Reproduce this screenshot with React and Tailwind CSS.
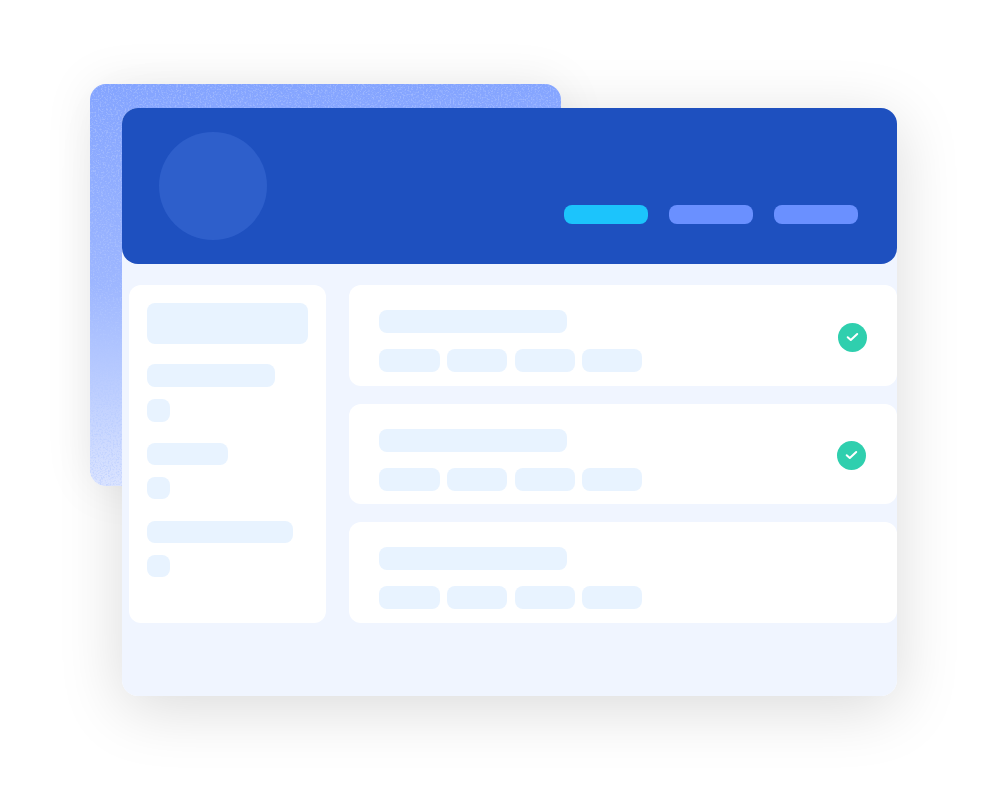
function Check({ className }) {
  return (
    <div className={`flex h-[29px] w-[29px] shrink-0 items-center justify-center rounded-full bg-[#2fcfae] ${className}`}>
      <svg width="13" height="10" viewBox="0 0 13 10" fill="none">
        <path d="M1.7 5.2 L4.8 8 L11.2 2" stroke="white" strokeWidth="2" strokeLinecap="round" strokeLinejoin="round" />
      </svg>
    </div>
  );
}

function Row({ check, className, checkClass }) {
  return (
    <div className={`flex items-start justify-between rounded-[12px] bg-white pl-[30px] pt-[25px] ${className}`}>
      <div className="flex flex-col gap-4">
        <div className="h-[23px] w-[188px] rounded-lg bg-[#e8f3ff]" />
        <div className="flex gap-[7.5px]">
          <div className="h-[23px] w-[60.5px] rounded-lg bg-[#e8f3ff]" />
          <div className="h-[23px] w-[60px] rounded-lg bg-[#e8f3ff]" />
          <div className="h-[23px] w-[60px] rounded-lg bg-[#e8f3ff]" />
          <div className="h-[23px] w-[60px] rounded-lg bg-[#e8f3ff]" />
        </div>
      </div>
      {check && <Check className={checkClass} />}
    </div>
  );
}

export default function App() {
  return (
    <div className="grid h-[792px] w-[987px] overflow-hidden bg-white">
      <div className="col-start-1 row-start-1 ml-[122px] mt-[108px] h-[588px] w-[775px] rounded-[16px] shadow-[0_12px_64px_rgba(0,0,0,0.15)]" />
      <div className="relative z-10 col-start-1 row-start-1 ml-[90px] mt-[84px] h-[402px] w-[471px] overflow-hidden rounded-[16px] bg-gradient-to-b from-[#84a4ff] via-[#9db6ff] via-50% to-[#dbe4ff] shadow-[0_0_50px_rgba(0,0,0,0.08)]">
        <svg className="h-full w-full opacity-50" aria-hidden="true">
          <filter id="grain">
            <feTurbulence type="fractalNoise" baseFrequency="0.6" numOctaves="2" seed="4" />
            <feColorMatrix values="0 0 0 0 0.45  0 0 0 0 0.58  0 0 0 0 1  0 0 0 4 -1.9" />
          </filter>
          <rect width="100%" height="100%" filter="url(#grain)" />
        </svg>
      </div>
      <div className="relative z-20 col-start-1 row-start-1 ml-[122px] mt-[108px] h-[588px] w-[775px] rounded-[16px] bg-[#f0f5ff]">
        <div className="flex h-[156px] items-end justify-between rounded-[16px] bg-[#1e50bf] pb-10 pl-[37px] pr-[39px] pt-6">
          <div className="h-[108px] w-[108px] self-start rounded-full bg-[#2e5fcb]" />
          <div className="flex gap-[21px]">
            <div className="h-[19px] w-[84px] rounded-lg bg-[#1cc4fc]" />
            <div className="h-[19px] w-[84px] rounded-lg bg-[#6a90ff]" />
            <div className="h-[19px] w-[84px] rounded-lg bg-[#6a90ff]" />
          </div>
        </div>
        <div className="flex gap-[23px] pl-[7px] pt-[21px]">
          <div className="flex h-[338px] w-[197px] flex-col rounded-[12px] bg-white px-[18px] pt-[18px]">
            <div className="h-[41px] w-[161px] rounded-lg bg-[#e8f3ff]" />
            <div className="mt-5 h-[23px] w-[128px] rounded-lg bg-[#e8f3ff]" />
            <div className="mt-3 h-[23px] w-[23px] rounded-lg bg-[#e8f3ff]" />
            <div className="mt-[21px] h-[22px] w-[81px] rounded-lg bg-[#e8f3ff]" />
            <div className="mt-3 h-[22px] w-[23px] rounded-lg bg-[#e8f3ff]" />
            <div className="mt-[22px] h-[22px] w-[146px] rounded-lg bg-[#e8f3ff]" />
            <div className="mt-3 h-[22px] w-[23px] rounded-lg bg-[#e8f3ff]" />
          </div>
          <div className="flex w-[548px] flex-col gap-[18px]">
            <Row check className="h-[101px]" checkClass="mr-[30px] mt-[12.5px]" />
            <Row check className="h-[100px]" checkClass="mr-[31px] mt-[11.5px]" />
            <Row className="h-[101px]" />
          </div>
        </div>
      </div>
    </div>
  );
}
